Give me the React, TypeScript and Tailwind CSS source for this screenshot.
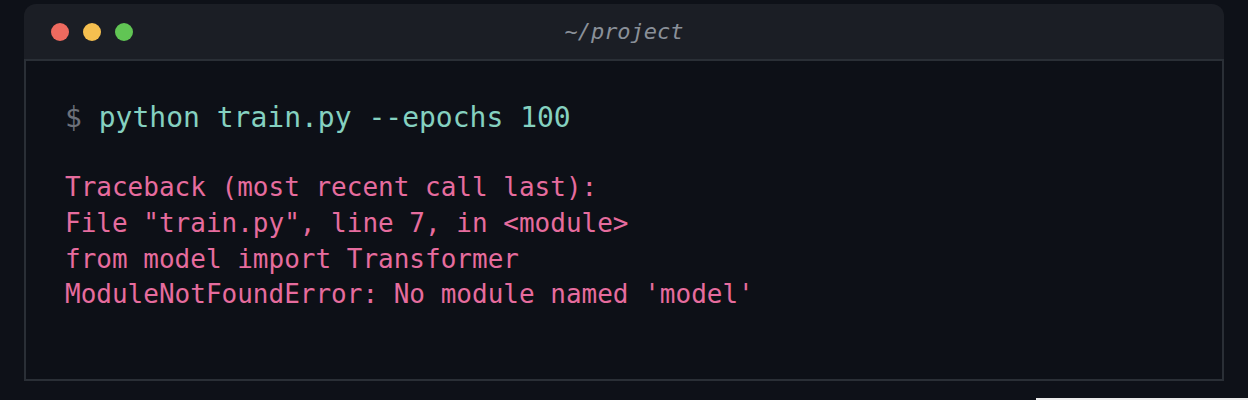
import React from "react";

const mono = { fontFamily: '"DejaVu Sans Mono", "Liberation Mono", monospace' };

export default function App() {
  return (
    <div className="w-[1248px] h-[400px] bg-[#0e1118] overflow-hidden" style={mono}>
      <div className="pt-[4px] px-[24px]">
        <div className="w-[1200px]">
          <div className="relative h-[55px] rounded-t-[12px] bg-[#1b1e25] flex items-center">
            <div className="flex items-center gap-[14px] pl-[27px]">
              <span className="w-[18px] h-[18px] rounded-full bg-[#ee6a5f]" />
              <span className="w-[18px] h-[18px] rounded-full bg-[#f5bf4f]" />
              <span className="w-[18px] h-[18px] rounded-full bg-[#61c554]" />
            </div>
            <div className="absolute inset-0 flex items-center justify-center pt-[1px]">
              <span className="italic text-[22px] leading-none text-[#8a9099]">~/project</span>
            </div>
          </div>
          <div className="h-[322px] border-2 border-[#2a2f36] bg-[#0d1017] pt-[37px] px-[39px]">
            <div className="text-[28px] leading-[40px] whitespace-pre">
              <span className="text-[#6c717a]">$ </span>
              <span className="text-[#85d1c0]">python train.py --epochs 100</span>
            </div>
            <div className="mt-[32px] text-[26px] leading-[35.75px] text-[#e66c9e] whitespace-pre">
              <div>Traceback (most recent call last):</div>
              <div>File "train.py", line 7, in &lt;module&gt;</div>
              <div>from model import Transformer</div>
              <div>ModuleNotFoundError: No module named 'model'</div>
            </div>
          </div>
        </div>
      </div>
      <div className="mt-[17px] ml-[1036px] h-[4px] bg-[#ececec]" />
    </div>
  );
}
